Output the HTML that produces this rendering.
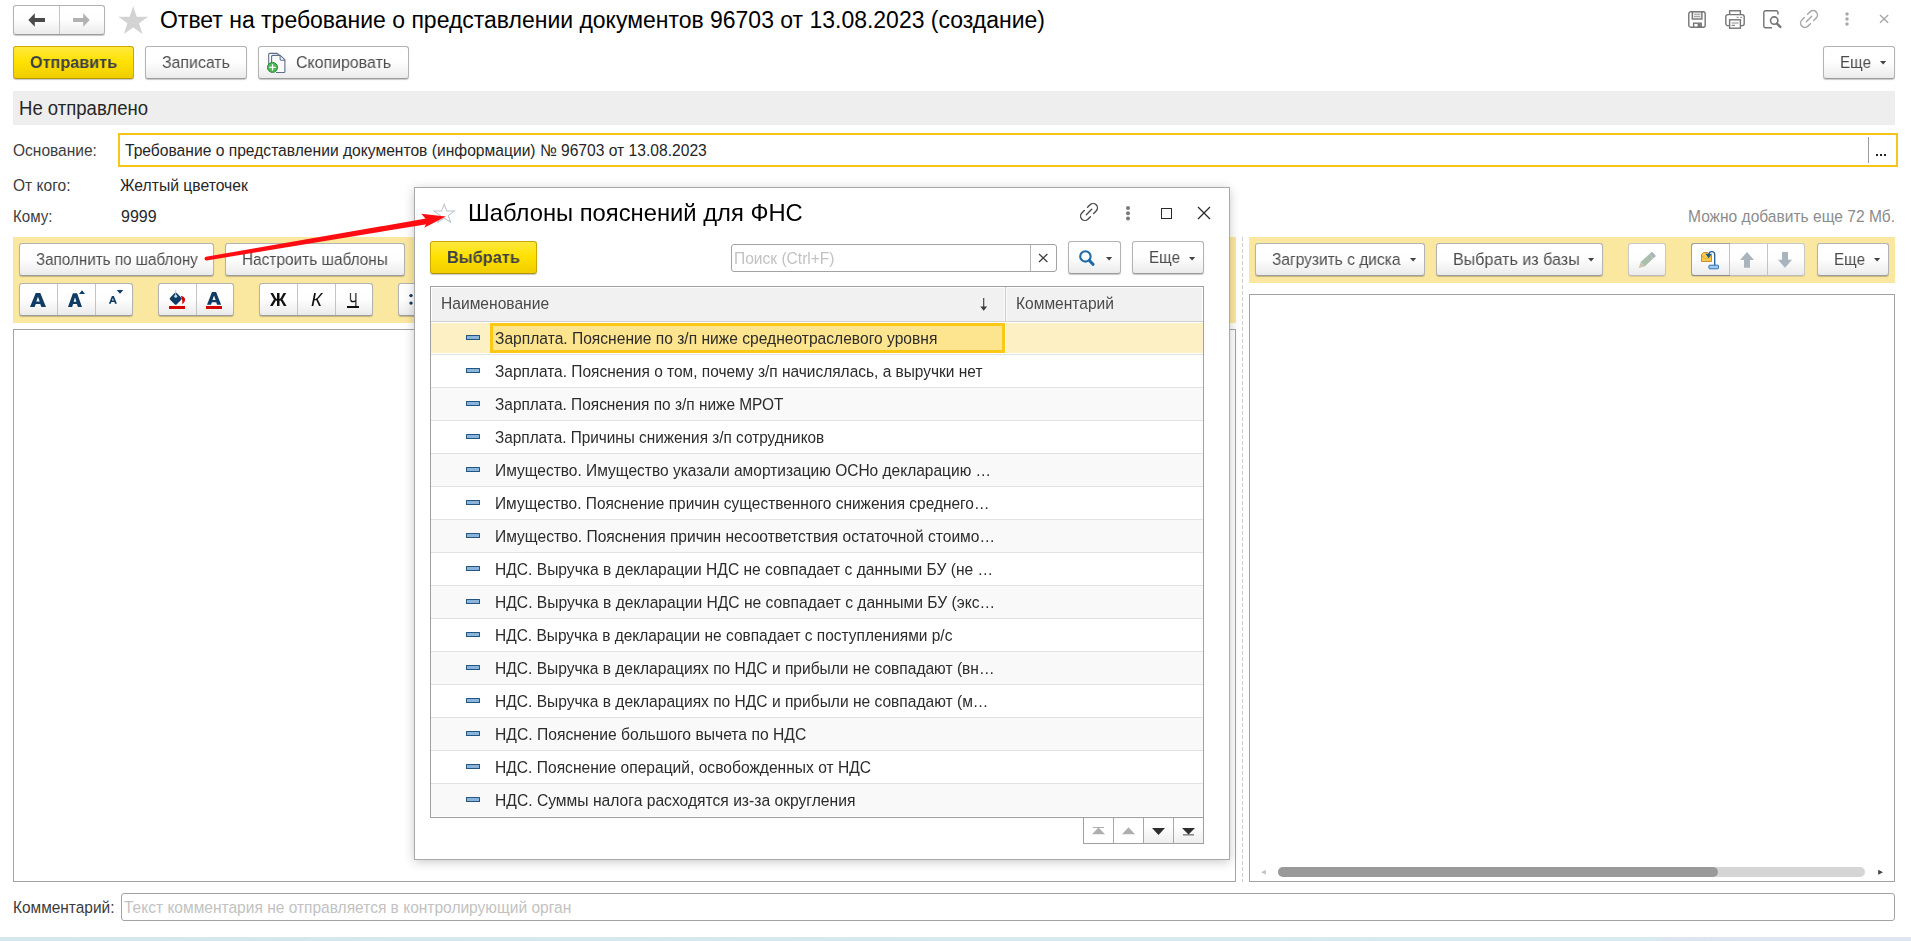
<!DOCTYPE html>
<html lang="ru">
<head>
<meta charset="utf-8">
<title>Ответ на требование о представлении документов</title>
<style>
*{box-sizing:border-box;margin:0;padding:0}
html,body{width:1911px;height:941px;overflow:hidden;background:#fff}
body{font-family:"Liberation Sans",sans-serif;font-size:16.67px;color:#333;position:relative}
.abs{position:absolute}
.t{position:absolute;white-space:nowrap;transform-origin:0 0}
.btn{position:absolute;border:1px solid #b3b3b3;border-bottom-color:#9c9c9c;border-radius:3px;background:linear-gradient(#ffffff 0%,#fefefe 48%,#ebebeb 100%);box-shadow:0 1px 1px rgba(0,0,0,.22)}
.btn.y{background:linear-gradient(#ffe93d 0%,#ffe100 48%,#efcd00 100%);border-color:#c9a800;border-bottom-color:#b39500}
.btn.dis{border-color:#c9c9c9;border-bottom-color:#bdbdbd;box-shadow:0 1px 1px rgba(0,0,0,.12)}
.btn i{position:absolute;top:0;bottom:0;width:1px;background:#c4c4c4}
svg{position:absolute;overflow:visible}
.ric{position:absolute;width:14px;height:5px;background:#8ab4dc;border:1px solid #24557f;border-radius:.5px}
</style>
</head>
<body>

<!-- header -->
<div class="btn " style="left:13px;top:5px;width:92px;height:30px;"><i style="left:45px"></i><svg style="left:13.6px;top:6.8px" width="18" height="14" viewBox="0 0 18 14"><path d="M0.3 7 L6.8 0.3 L6.8 5 L17 5 L17 9 L6.8 9 L6.8 13.7 Z" fill="#4a4a4a"/></svg><svg style="left:57.7px;top:6.8px" width="18" height="14" viewBox="0 0 18 14"><path d="M17.7 7 L11.2 0.3 L11.2 5 L1 5 L1 9 L11.2 9 L11.2 13.7 Z" fill="#b2b2b2"/></svg></div>
<svg style="left:118.2px;top:6px" width="30.4" height="28" viewBox="0 0 30 28" preserveAspectRatio="none"><path d="M15 0 L18.5 10.7 L29.8 10.7 L20.7 17.3 L24.2 28 L15 21.4 L5.8 28 L9.3 17.3 L0.2 10.7 L11.5 10.7 Z" fill="#d3d3d3"/></svg>
<div class="t" style="left:159.80px;top:6.30px;font-size:23.3px;line-height:29px;height:29px;color:#000;transform:scaleX(0.9861);">Ответ на требование о представлении документов 96703 от 13.08.2023 (создание)</div>
<svg style="left:1688px;top:11px" width="18" height="17" viewBox="0 0 18 17" fill="none" stroke="#757575" stroke-width="1.4">
<rect x="0.8" y="0.8" width="16.4" height="15.4" rx="2"/>
<rect x="4.3" y="0.8" width="9.6" height="7.2" fill="#e9e9e9"/>
<path d="M6 3.3 H12.2 M6 5.5 H12.2" stroke="#a5a5a5" stroke-width="1"/>
<rect x="5.6" y="12.2" width="7.6" height="4" fill="#fff"/>
<rect x="9.6" y="12.9" width="3.2" height="3.2" fill="#777" stroke="none"/>
</svg>
<svg style="left:1725px;top:10px" width="20" height="19" viewBox="0 0 20 19" fill="none" stroke="#757575" stroke-width="1.4">
<rect x="4.6" y="0.8" width="10.8" height="4"/>
<rect x="0.8" y="4.6" width="18.4" height="11" rx="2.2" fill="#fff"/>
<path d="M11.6 7.3 H13.6 M15.2 7.3 H17.2" stroke="#999" stroke-width="1.2"/>
<rect x="4.6" y="9.8" width="10.8" height="8.4" fill="#fff"/>
<path d="M6.6 13 H13.6 M6.6 15.4 H10" stroke="#8a8a8a" stroke-width="1.2"/>
</svg>
<svg style="left:1763px;top:10px" width="19" height="19" viewBox="0 0 19 19" fill="none" stroke="#757575" stroke-width="1.4">
<path d="M9 17.7 H2.4 a1.6 1.6 0 0 1 -1.6 -1.6 V2.4 a1.6 1.6 0 0 1 1.6 -1.6 H13.4 a1.6 1.6 0 0 1 1.6 1.6 V4.6"/>
<circle cx="11.2" cy="10.6" r="3.7" stroke-width="1.6"/>
<path d="M14 13.6 L17.3 16.9" stroke-width="2.4" stroke-linecap="round"/>
</svg>
<svg style="left:1809.2px;top:18.9px" width="1" height="1" viewBox="0 0 1 1" fill="none" stroke="#a9a9a9" stroke-width="1.5" stroke-linecap="round">
<g transform="rotate(-45)"><path d="M2.3 -4.3 H5.8 A4.3 4.3 0 0 1 5.8 4.3 H2.3"/><path d="M-2.3 4.3 H-5.8 A4.3 4.3 0 0 1 -5.8 -4.3 H-2.3"/><path d="M-3.8 0 H3.8"/></g></svg>
<svg style="left:1844.6px;top:11.9px" width="4" height="14" viewBox="0 0 4 14" fill="#a9a9a9"><circle cx="2" cy="2" r="1.75"/><circle cx="2" cy="7" r="1.75"/><circle cx="2" cy="12.1" r="1.75"/></svg>
<svg style="left:1880.4px;top:15.1px" width="8.2" height="7.8" viewBox="0 0 8.2 7.8" stroke="#a6a6a6" stroke-width="1.3"><path d="M0 0 L8.2 7.8 M8.2 0 L0 7.8"/></svg>
<!-- command bar -->
<div class="btn y" style="left:13px;top:46px;width:121px;height:33px;"></div>
<div class="t" style="left:30.00px;top:52.30px;font-size:16.67px;line-height:21px;height:21px;color:#3a3f4a;transform:scaleX(0.9748);font-weight:bold;will-change:transform;">Отправить</div>
<div class="btn " style="left:145px;top:46px;width:102px;height:33px;"></div>
<div class="t" style="left:162.00px;top:52.30px;font-size:16.67px;line-height:21px;height:21px;color:#4c4c4c;transform:scaleX(0.9545);will-change:transform;">Записать</div>
<div class="btn " style="left:258px;top:46px;width:151px;height:33px;"><svg style="left:-1px;top:-1px" width="32" height="32" viewBox="0 0 32 32" fill="none" stroke="#5d6e86" stroke-width="1.1" stroke-linejoin="round">
<path d="M10.7 19 V8.4 a1 1 0 0 1 1 -1 H19.3 L21.6 9.5"/>
<path d="M13.6 16.5 V10.4 a1 1 0 0 1 1 -1 H22.1 L26.9 13.7 V25.5 a1 1 0 0 1 -1 1 H18" fill="#fbfbfb"/>
<path d="M22.1 9.4 V13 a1.2 1.2 0 0 0 1.2 1.2 H26.9" />
<circle cx="14.5" cy="21.4" r="5" fill="#4fb85c" stroke="#1d8e2c" stroke-width="1"/>
<path d="M11.3 21.4 H17.7 M14.5 18.2 V24.6" stroke="#fff" stroke-width="1.2"/>
</svg></div>
<div class="t" style="left:296.00px;top:52.30px;font-size:16.67px;line-height:21px;height:21px;color:#4c4c4c;transform:scaleX(0.9562);will-change:transform;">Скопировать</div>
<div class="btn " style="left:1823px;top:46px;width:72px;height:33px;"></div>
<div class="t" style="left:1840.00px;top:52.30px;font-size:16.67px;line-height:21px;height:21px;color:#4c4c4c;transform:scaleX(0.9140);will-change:transform;">Еще</div>
<svg style="left:1879.8px;top:61.2px" width="6.2" height="3.6" viewBox="0 0 6.2 3.6"><path d="M0 0 H6.2 L3.1 3.6 Z" fill="#444"/></svg>
<div class="abs" style="left:13px;top:91px;width:1882px;height:34px;background:#eeeeee"></div>
<div class="t" style="left:19.20px;top:96.30px;font-size:20px;line-height:25px;height:25px;color:#262626;transform:scaleX(0.9269);">Не отправлено</div>
<div class="t" style="left:13.30px;top:140.30px;font-size:16.67px;line-height:21px;height:21px;color:#3c3c3c;transform:scaleX(0.9319);">Основание:</div>
<div class="abs" style="left:118px;top:133px;width:1780px;height:34px;border:2px solid #f8c51b;background:#fff"></div>
<div class="t" style="left:125.00px;top:140.30px;font-size:16.67px;line-height:21px;height:21px;color:#262626;transform:scaleX(0.9378);">Требование о представлении документов (информации) № 96703 от 13.08.2023</div>
<div class="abs" style="left:1868px;top:137px;width:1px;height:26px;background:#9c9c9c"></div>
<div class="abs" style="left:1876px;top:154px;width:2px;height:2px;background:#222;box-shadow:4px 0 0 #222,8px 0 0 #222"></div>
<div class="t" style="left:13.30px;top:175.30px;font-size:16.67px;line-height:21px;height:21px;color:#3c3c3c;transform:scaleX(0.9350);">От кого:</div>
<div class="t" style="left:120.30px;top:175.30px;font-size:16.67px;line-height:21px;height:21px;color:#262626;transform:scaleX(0.9431);">Желтый цветочек</div>
<div class="t" style="left:13.30px;top:206.30px;font-size:16.67px;line-height:21px;height:21px;color:#3c3c3c;transform:scaleX(0.9060);">Кому:</div>
<div class="t" style="left:120.60px;top:206.30px;font-size:16.67px;line-height:21px;height:21px;color:#262626;transform:scaleX(0.9600);">9999</div>
<div class="t" style="left:1687.53px;top:206.30px;font-size:16.67px;line-height:21px;height:21px;color:#8c8c8c;transform:scaleX(0.9340);">Можно добавить еще 72 Мб.</div>
<!-- left toolbar -->
<div class="abs" style="left:13px;top:237px;width:1223px;height:86px;background:#fbe8a0"></div>
<div class="btn " style="left:19px;top:243px;width:195px;height:33px;"></div>
<div class="t" style="left:36.00px;top:249.30px;font-size:16.67px;line-height:21px;height:21px;color:#4c4c4c;transform:scaleX(0.9123);will-change:transform;">Заполнить по шаблону</div>
<div class="btn " style="left:225px;top:243px;width:180px;height:33px;"></div>
<div class="t" style="left:242.00px;top:249.30px;font-size:16.67px;line-height:21px;height:21px;color:#4c4c4c;transform:scaleX(0.9246);will-change:transform;">Настроить шаблоны</div>
<div class="btn " style="left:19px;top:283px;width:114px;height:33px;"><i style="left:37px"></i><i style="left:75px"></i></div>
<svg style="left:0;top:0" width="1" height="1" viewBox="0 0 1 1" fill="#0f3c64" fill-rule="evenodd"><path d="M30 307 L35.7 293 L40.3 293 L46 307 L41.4 307 L40.2 303.9 L35.8 303.9 L34.6 307 Z M36.3 301.6 L39.7 301.6 L38 296.7 Z"/><path d="M68 307 L72.9 293.3 L77.1 293.3 L82 307 L77.9 307 L76.9 304 L73.1 304 L72.1 307 Z M73.6 301.7 L76.4 301.7 L75 297.2 Z"/><path d="M82 290.2 L85 294 L79 294 Z"/><path d="M108.9 303.8 L111.9 296 L113.9 296 L116.9 303.8 L115 303.8 L114.4 302 L111.4 302 L110.8 303.8 Z M112 300.5 L113.8 300.5 L112.9 298 Z"/><path d="M116.7 290 H123.3 L120 293.7 Z"/></svg>
<div class="btn " style="left:158px;top:283px;width:76px;height:33px;"><i style="left:37px"></i></div>
<svg style="left:0;top:0" width="1" height="1" viewBox="0 0 1 1"><rect x="171" y="294" width="9.4" height="9.4" rx="1.5" transform="rotate(45 175.7 298.7)" fill="#0f3c64"/><path d="M175.7 290.2 V296" stroke="#a9c3d8" stroke-width="1"/><circle cx="175.7" cy="296.3" r="1.5" fill="#c4dbec"/><path d="M180.8 296 C185.8 296.2 186.6 301.4 182.2 304.2 C182.6 301.6 182.2 299.4 181.6 298 Z" fill="#d80000"/><rect x="169" y="306" width="16" height="3" fill="#d40000"/><path fill-rule="evenodd" fill="#0f3c64" d="M207 304.8 L212 292.1 L216.1 292.1 L221.1 304.8 L217.1 304.8 L216.2 302.2 L211.9 302.2 L211 304.8 Z M212.5 300 L215.6 300 L214.05 295.6 Z"/><rect x="206" y="306" width="16" height="3" fill="#d40000"/></svg>
<div class="btn " style="left:259px;top:283px;width:114px;height:33px;"><i style="left:37px"></i><i style="left:75px"></i></div>
<div class="t" style="left:270.00px;top:289.30px;font-size:17.8px;line-height:22px;height:22px;color:#111;transform:scaleX(1.0256);font-weight:bold;will-change:transform;">Ж</div>
<div class="t" style="left:310.50px;top:289.30px;font-size:17.8px;line-height:22px;height:22px;color:#111;transform:scaleX(1.0676);font-style:italic;will-change:transform;">К</div>
<div class="t" style="left:348.80px;top:289.30px;font-size:17.8px;line-height:22px;height:22px;color:#111;transform:scaleX(0.7165);will-change:transform;">Ч</div>
<div class="abs" style="left:347px;top:306.2px;width:12px;height:1.6px;background:#111"></div>
<div class="btn " style="left:398px;top:283px;width:76px;height:33px;"></div>
<svg style="left:0;top:0" width="1" height="1" viewBox="0 0 1 1" fill="#0f3c64"><circle cx="411" cy="295.6" r="1.7"/><circle cx="411" cy="303.1" r="1.7"/></svg>
<div class="abs" style="left:13px;top:329px;width:1223px;height:553px;border:1px solid #a3a3a3;background:#fff"></div>
<div class="abs" style="left:1242px;top:237px;width:1px;height:645px;background:repeating-linear-gradient(180deg,#cecece 0,#cecece 4px,transparent 4px,transparent 6px)"></div>
<!-- right toolbar -->
<div class="abs" style="left:1249px;top:237px;width:646px;height:46px;background:#fbe8a0"></div>
<div class="btn " style="left:1255px;top:243px;width:170px;height:33px;"></div>
<div class="t" style="left:1272.00px;top:249.30px;font-size:16.67px;line-height:21px;height:21px;color:#4c4c4c;transform:scaleX(0.9310);will-change:transform;">Загрузить с диска</div>
<svg style="left:1410.2px;top:258.3px" width="6.2" height="3.6" viewBox="0 0 6.2 3.6"><path d="M0 0 H6.2 L3.1 3.6 Z" fill="#444"/></svg>
<div class="btn " style="left:1436px;top:243px;width:167px;height:33px;"></div>
<div class="t" style="left:1453.00px;top:249.30px;font-size:16.67px;line-height:21px;height:21px;color:#4c4c4c;transform:scaleX(0.9662);will-change:transform;">Выбрать из базы</div>
<svg style="left:1588px;top:258.3px" width="6.2" height="3.6" viewBox="0 0 6.2 3.6"><path d="M0 0 H6.2 L3.1 3.6 Z" fill="#444"/></svg>
<div class="btn dis" style="left:1628px;top:243px;width:38px;height:33px;"></div>
<svg style="left:0;top:0" width="1" height="1" viewBox="0 0 1 1">
<path d="M1638.7 267.9 L1640.7 262 L1644.7 266.4 Z" fill="#cbc2b3"/>
<path d="M1640.7 262 L1649.4 253.9 L1653.4 258.3 L1644.7 266.4 Z" fill="#a9bfab"/>
<path d="M1649.4 253.9 L1651.2 252.2 a1 1 0 0 1 1.4 0.05 L1655.4 255.3 a1 1 0 0 1 -0.05 1.4 L1653.4 258.3 Z" fill="#aab5bf"/>
</svg>
<div class="btn dis" style="left:1691px;top:243px;width:114px;height:33px;"><i style="left:37px"></i><i style="left:75px"></i></div>
<div class="abs" style="left:1691px;top:243px;width:39px;height:33px;border:1px solid #a0a0a0;border-right:none;border-bottom-color:#8c8c8c;border-radius:3px 0 0 3px"></div>
<svg style="left:0;top:0" width="1" height="1" viewBox="0 0 1 1">
<path d="M1701.5 254.5 L1703.5 252.5 H1707.5 L1709 254.5 H1711.5 V261.5 H1701.5 Z" fill="#f8cb4c" stroke="#c98d2d" stroke-width="1"/>
<path d="M1702 256 L1706.5 259.2 L1711 256" fill="none" stroke="#e9a93a" stroke-width="1"/>
<path d="M1714.7 265 V254.6 a2.9 2.9 0 0 0 -5.8 0" fill="none" stroke="#205f92" stroke-width="1.3"/>
<path d="M1705.4 253.8 L1711.8 253.8 L1708.6 258.2 Z" fill="#1d5a8c"/>
<rect x="1708.9" y="265.2" width="9.6" height="3.6" rx="0.8" fill="#a4c8f0" stroke="#2f6fb5" stroke-width="1"/>
<path d="M1747 252 L1754 260 H1750 V267.2 a0.6 0.6 0 0 1 -0.6 0.6 H1744.6 a0.6 0.6 0 0 1 -0.6 -0.6 V260 H1740 Z" fill="#a9b4bd"/>
<path d="M1785 267.8 L1792 259.8 H1788 V252.6 a0.6 0.6 0 0 0 -0.6 -0.6 H1782.6 a0.6 0.6 0 0 0 -0.6 0.6 V259.8 H1778 Z" fill="#a9b4bd"/>
</svg>
<div class="btn " style="left:1817px;top:243px;width:72px;height:33px;"></div>
<div class="t" style="left:1834.30px;top:249.30px;font-size:16.67px;line-height:21px;height:21px;color:#4c4c4c;transform:scaleX(0.9140);will-change:transform;">Еще</div>
<svg style="left:1873.5px;top:258.3px" width="6.2" height="3.6" viewBox="0 0 6.2 3.6"><path d="M0 0 H6.2 L3.1 3.6 Z" fill="#444"/></svg>
<div class="abs" style="left:1249px;top:294px;width:646px;height:588px;border:1px solid #a3a3a3;background:#fff"></div>
<div class="abs" style="left:1278px;top:867px;width:587px;height:10px;border-radius:5px;background:#d5d5d5"></div>
<div class="abs" style="left:1278px;top:867px;width:440px;height:10px;border-radius:5px;background:#999"></div>
<svg style="left:0;top:0" width="1" height="1" viewBox="0 0 1 1"><path d="M1261.3 872.3 L1265.8 869.8 V874.8 Z" fill="#c2c2c2"/><path d="M1883 872.3 L1878.2 869.8 V874.8 Z" fill="#444"/></svg>
<div class="t" style="left:13.30px;top:897.30px;font-size:16.67px;line-height:21px;height:21px;color:#3c3c3c;transform:scaleX(0.9259);">Комментарий:</div>
<div class="abs" style="left:121px;top:893px;width:1774px;height:28px;border:1px solid #a3a3a3;border-radius:3px;background:#fff"></div>
<div class="t" style="left:123.70px;top:897.30px;font-size:16.67px;line-height:21px;height:21px;color:#c2c2c2;transform:scaleX(0.9320);">Текст комментария не отправляется в контролирующий орган</div>
<div class="abs" style="left:0;top:937px;width:1911px;height:4px;background:linear-gradient(90deg,#d4e7ef 0%,#d8ebf3 86%,#dde5ee 87.5%,#dfe6ef 100%)"></div>
<!-- dialog -->
<div class="abs" style="left:414px;top:187px;width:816px;height:673px;background:#fff;border:1px solid #a9a9a9;box-shadow:0 2px 10px rgba(0,0,0,.21)"></div>
<svg style="left:433px;top:202.8px" width="22.4" height="20.2" viewBox="0 0 22 19.2"><path d="M11 0.9 L13.5 7.6 L21 7.6 L15 11.9 L17.3 18.6 L11 14.5 L4.7 18.6 L7 11.9 L1 7.6 L8.5 7.6 Z" fill="#fff" stroke="#bcc4cc" stroke-width="1" stroke-linejoin="miter"/></svg>
<div class="t" style="left:467.60px;top:198.30px;font-size:24px;line-height:30px;height:30px;color:#000;transform:scaleX(0.9903);">Шаблоны пояснений для ФНС</div>
<svg style="left:1089.3px;top:212.4px" width="1" height="1" viewBox="0 0 1 1" fill="none" stroke="#4a4a4a" stroke-width="1.4" stroke-linecap="round">
<g transform="rotate(-45)"><path d="M2.3 -4.3 H5.8 A4.3 4.3 0 0 1 5.8 4.3 H2.3"/><path d="M-2.3 4.3 H-5.8 A4.3 4.3 0 0 1 -5.8 -4.3 H-2.3"/><path d="M-3.8 0 H3.8"/></g></svg>
<svg style="left:1126px;top:205.8px" width="4" height="14.5" viewBox="0 0 4 14.5" fill="#7a7a7a"><circle cx="2" cy="2" r="2"/><circle cx="2" cy="7.2" r="2"/><circle cx="2" cy="12.4" r="2"/></svg>
<div class="abs" style="left:1161px;top:208px;width:11px;height:11px;border:1.3px solid #2a2a2a"></div>
<svg style="left:1198px;top:207.1px" width="12" height="12" viewBox="0 0 12 12" stroke="#2a2a2a" stroke-width="1.25"><path d="M0 0 L12 12 M12 0 L0 12"/></svg>
<div class="btn y" style="left:430px;top:241px;width:107px;height:33px;"></div>
<div class="t" style="left:446.70px;top:247.30px;font-size:16.67px;line-height:21px;height:21px;color:#3a3f4a;transform:scaleX(0.9793);font-weight:bold;will-change:transform;">Выбрать</div>
<div class="abs" style="left:731px;top:244px;width:326px;height:28px;border:1px solid #a3a3a3;border-radius:3px;background:#fff"></div>
<div class="abs" style="left:1030px;top:245px;width:1px;height:26px;background:#b4b4b4"></div>
<div class="t" style="left:733.50px;top:248.30px;font-size:16.67px;line-height:21px;height:21px;color:#c2c2c2;transform:scaleX(0.9335);">Поиск (Ctrl+F)</div>
<svg style="left:1038.8px;top:254px" width="8.4" height="8" viewBox="0 0 8.4 8" stroke="#3c3c3c" stroke-width="1.2"><path d="M0 0 L8.4 8 M8.4 0 L0 8"/></svg>
<div class="btn " style="left:1068px;top:241px;width:53px;height:33px;"></div>
<svg style="left:0;top:0" width="1" height="1" viewBox="0 0 1 1" fill="none" stroke="#1f6aa5"><circle cx="1085.4" cy="256.4" r="5.2" stroke-width="2.1"/><path d="M1089.6 260.7 L1093 264.3" stroke-width="3.1" stroke-linecap="round"/></svg>
<svg style="left:1105.9px;top:256.8px" width="6.2" height="3.6" viewBox="0 0 6.2 3.6"><path d="M0 0 H6.2 L3.1 3.6 Z" fill="#444"/></svg>
<div class="btn " style="left:1132px;top:241px;width:72px;height:33px;"></div>
<div class="t" style="left:1149.40px;top:247.30px;font-size:16.67px;line-height:21px;height:21px;color:#4c4c4c;transform:scaleX(0.9140);will-change:transform;">Еще</div>
<svg style="left:1189px;top:256.8px" width="6.2" height="3.6" viewBox="0 0 6.2 3.6"><path d="M0 0 H6.2 L3.1 3.6 Z" fill="#444"/></svg>
<div class="abs" style="left:430px;top:286px;width:774px;height:532px;border:1px solid #a0a0a0;background:#fff"></div>
<div class="abs" style="left:432px;top:288px;width:770px;height:33px;background:#f1f1f1"></div>
<div class="abs" style="left:431px;top:321px;width:772px;height:1px;background:#d0d0d0"></div>
<div class="abs" style="left:1004px;top:287px;width:3px;height:34px;background:#fafafa"></div>
<div class="abs" style="left:1005px;top:287px;width:1px;height:34px;background:#cdcdcd"></div>
<div class="t" style="left:441.20px;top:293.30px;font-size:16.67px;line-height:21px;height:21px;color:#4a4a4a;transform:scaleX(0.9363);">Наименование</div>
<div class="t" style="left:1016.20px;top:293.30px;font-size:16.67px;line-height:21px;height:21px;color:#4a4a4a;transform:scaleX(0.9334);">Комментарий</div>
<svg style="left:979.8px;top:298.3px" width="8" height="13" viewBox="0 0 8 13"><path d="M3.7 0 V10" stroke="#3a3a3a" stroke-width="1.1" fill="none"/><path d="M0.3 8.4 H7.1 L3.7 12.8 Z" fill="#3a3a3a"/></svg>
<div class="abs" style="left:431px;top:323px;width:772px;height:30px;background:#fdf0c4"></div>
<div class="abs" style="left:490px;top:323px;width:515px;height:30px;background:#fde48e;border:3px solid #fbc816"></div>
<div class="abs" style="left:1005px;top:323px;width:1px;height:30px;background:#fefaf0"></div>
<div class="abs" style="left:431px;top:354px;width:772px;height:1px;background:#e2e2e2"></div>
<div class="ric" style="left:466px;top:335px"></div>
<div class="t" style="left:494.70px;top:328.30px;font-size:16.67px;line-height:21px;height:21px;color:#2b2b2b;transform:scaleX(0.9366);">Зарплата. Пояснение по з/п ниже среднеотраслевого уровня</div>
<div class="abs" style="left:431px;top:387px;width:772px;height:1px;background:#e2e2e2"></div>
<div class="ric" style="left:466px;top:368px"></div>
<div class="t" style="left:494.70px;top:361.30px;font-size:16.67px;line-height:21px;height:21px;color:#2b2b2b;transform:scaleX(0.9286);">Зарплата. Пояснения о том, почему з/п начислялась, а выручки нет</div>
<div class="abs" style="left:431px;top:388px;width:772px;height:32px;background:#f9f9f9"></div>
<div class="abs" style="left:431px;top:420px;width:772px;height:1px;background:#e2e2e2"></div>
<div class="ric" style="left:466px;top:401px"></div>
<div class="t" style="left:494.70px;top:394.30px;font-size:16.67px;line-height:21px;height:21px;color:#2b2b2b;transform:scaleX(0.9261);">Зарплата. Пояснения по з/п ниже МРОТ</div>
<div class="abs" style="left:431px;top:453px;width:772px;height:1px;background:#e2e2e2"></div>
<div class="ric" style="left:466px;top:434px"></div>
<div class="t" style="left:494.70px;top:427.30px;font-size:16.67px;line-height:21px;height:21px;color:#2b2b2b;transform:scaleX(0.9209);">Зарплата. Причины снижения з/п сотрудников</div>
<div class="abs" style="left:431px;top:454px;width:772px;height:32px;background:#f9f9f9"></div>
<div class="abs" style="left:431px;top:486px;width:772px;height:1px;background:#e2e2e2"></div>
<div class="ric" style="left:466px;top:467px"></div>
<div class="t" style="left:494.70px;top:460.30px;font-size:16.67px;line-height:21px;height:21px;color:#2b2b2b;transform:scaleX(0.9310);">Имущество. Имущество указали амортизацию ОСНо декларацию …</div>
<div class="abs" style="left:431px;top:519px;width:772px;height:1px;background:#e2e2e2"></div>
<div class="ric" style="left:466px;top:500px"></div>
<div class="t" style="left:494.70px;top:493.30px;font-size:16.67px;line-height:21px;height:21px;color:#2b2b2b;transform:scaleX(0.9276);">Имущество. Пояснение причин существенного снижения среднего…</div>
<div class="abs" style="left:431px;top:520px;width:772px;height:32px;background:#f9f9f9"></div>
<div class="abs" style="left:431px;top:552px;width:772px;height:1px;background:#e2e2e2"></div>
<div class="ric" style="left:466px;top:533px"></div>
<div class="t" style="left:494.70px;top:526.30px;font-size:16.67px;line-height:21px;height:21px;color:#2b2b2b;transform:scaleX(0.9350);">Имущество. Пояснения причин несоответствия остаточной стоимо…</div>
<div class="abs" style="left:431px;top:585px;width:772px;height:1px;background:#e2e2e2"></div>
<div class="ric" style="left:466px;top:566px"></div>
<div class="t" style="left:494.70px;top:559.30px;font-size:16.67px;line-height:21px;height:21px;color:#2b2b2b;transform:scaleX(0.9360);">НДС. Выручка в декларации НДС не совпадает с данными БУ (не …</div>
<div class="abs" style="left:431px;top:586px;width:772px;height:32px;background:#f9f9f9"></div>
<div class="abs" style="left:431px;top:618px;width:772px;height:1px;background:#e2e2e2"></div>
<div class="ric" style="left:466px;top:599px"></div>
<div class="t" style="left:494.70px;top:592.30px;font-size:16.67px;line-height:21px;height:21px;color:#2b2b2b;transform:scaleX(0.9376);">НДС. Выручка в декларации НДС не совпадает с данными БУ (экс…</div>
<div class="abs" style="left:431px;top:651px;width:772px;height:1px;background:#e2e2e2"></div>
<div class="ric" style="left:466px;top:632px"></div>
<div class="t" style="left:494.70px;top:625.30px;font-size:16.67px;line-height:21px;height:21px;color:#2b2b2b;transform:scaleX(0.9291);">НДС. Выручка в декларации не совпадает с поступлениями р/с</div>
<div class="abs" style="left:431px;top:652px;width:772px;height:32px;background:#f9f9f9"></div>
<div class="abs" style="left:431px;top:684px;width:772px;height:1px;background:#e2e2e2"></div>
<div class="ric" style="left:466px;top:665px"></div>
<div class="t" style="left:494.70px;top:658.30px;font-size:16.67px;line-height:21px;height:21px;color:#2b2b2b;transform:scaleX(0.9341);">НДС. Выручка в декларациях по НДС и прибыли не совпадают (вн…</div>
<div class="abs" style="left:431px;top:717px;width:772px;height:1px;background:#e2e2e2"></div>
<div class="ric" style="left:466px;top:698px"></div>
<div class="t" style="left:494.70px;top:691.30px;font-size:16.67px;line-height:21px;height:21px;color:#2b2b2b;transform:scaleX(0.9342);">НДС. Выручка в декларациях по НДС и прибыли не совпадают (м…</div>
<div class="abs" style="left:431px;top:718px;width:772px;height:32px;background:#f9f9f9"></div>
<div class="abs" style="left:431px;top:750px;width:772px;height:1px;background:#e2e2e2"></div>
<div class="ric" style="left:466px;top:731px"></div>
<div class="t" style="left:494.70px;top:724.30px;font-size:16.67px;line-height:21px;height:21px;color:#2b2b2b;transform:scaleX(0.9406);">НДС. Пояснение большого вычета по НДС</div>
<div class="abs" style="left:431px;top:783px;width:772px;height:1px;background:#e2e2e2"></div>
<div class="ric" style="left:466px;top:764px"></div>
<div class="t" style="left:494.70px;top:757.30px;font-size:16.67px;line-height:21px;height:21px;color:#2b2b2b;transform:scaleX(0.9365);">НДС. Пояснение операций, освобожденных от НДС</div>
<div class="abs" style="left:431px;top:784px;width:772px;height:32px;background:#f9f9f9"></div>
<div class="ric" style="left:466px;top:797px"></div>
<div class="t" style="left:494.70px;top:790.30px;font-size:16.67px;line-height:21px;height:21px;color:#2b2b2b;transform:scaleX(0.9392);">НДС. Суммы налога расходятся из-за округления</div>
<div class="abs" style="left:1083px;top:817px;width:121px;height:27px;border:1px solid #a0a0a0;background:#fff"></div>
<div class="abs" style="left:1144px;top:818px;width:59px;height:25px;background:linear-gradient(#fff 30%,#eee)"></div>
<div class="abs" style="left:1113px;top:818px;width:1px;height:25px;background:#a8a8a8"></div>
<div class="abs" style="left:1143px;top:818px;width:1px;height:25px;background:#a8a8a8"></div>
<div class="abs" style="left:1173px;top:818px;width:1px;height:25px;background:#a8a8a8"></div>
<svg style="left:0;top:0" width="1" height="1" viewBox="0 0 1 1">
<path d="M1092.8 826.9 H1104 V828 H1092.8 Z M1098.5 827.4 L1105 834.2 H1092 Z" fill="#aeaeae"/>
<path d="M1128.5 827.2 L1135 834.2 H1122 Z" fill="#aeaeae"/>
<path d="M1158.5 834.9 L1165 828 H1152 Z" fill="#2e2e2e"/>
<path d="M1183 834 H1194 V835.6 H1183 Z" fill="#8a8a8a"/><path d="M1188.5 834.6 L1195 828 H1182 Z" fill="#2e2e2e"/>
</svg>
<svg style="left:0;top:0" width="1" height="1" viewBox="0 0 1 1" fill="#fd0d12">
<circle cx="206.4" cy="258.6" r="1.85"/>
<path d="M206.1 256.8 L427.3 218.3 L428.5 223.9 L206.7 260.4 Z"/>
<path d="M445.9 216.6 L421.3 213.8 L427.6 221 L424.3 227.8 Z"/>
</svg>
</body>
</html>
